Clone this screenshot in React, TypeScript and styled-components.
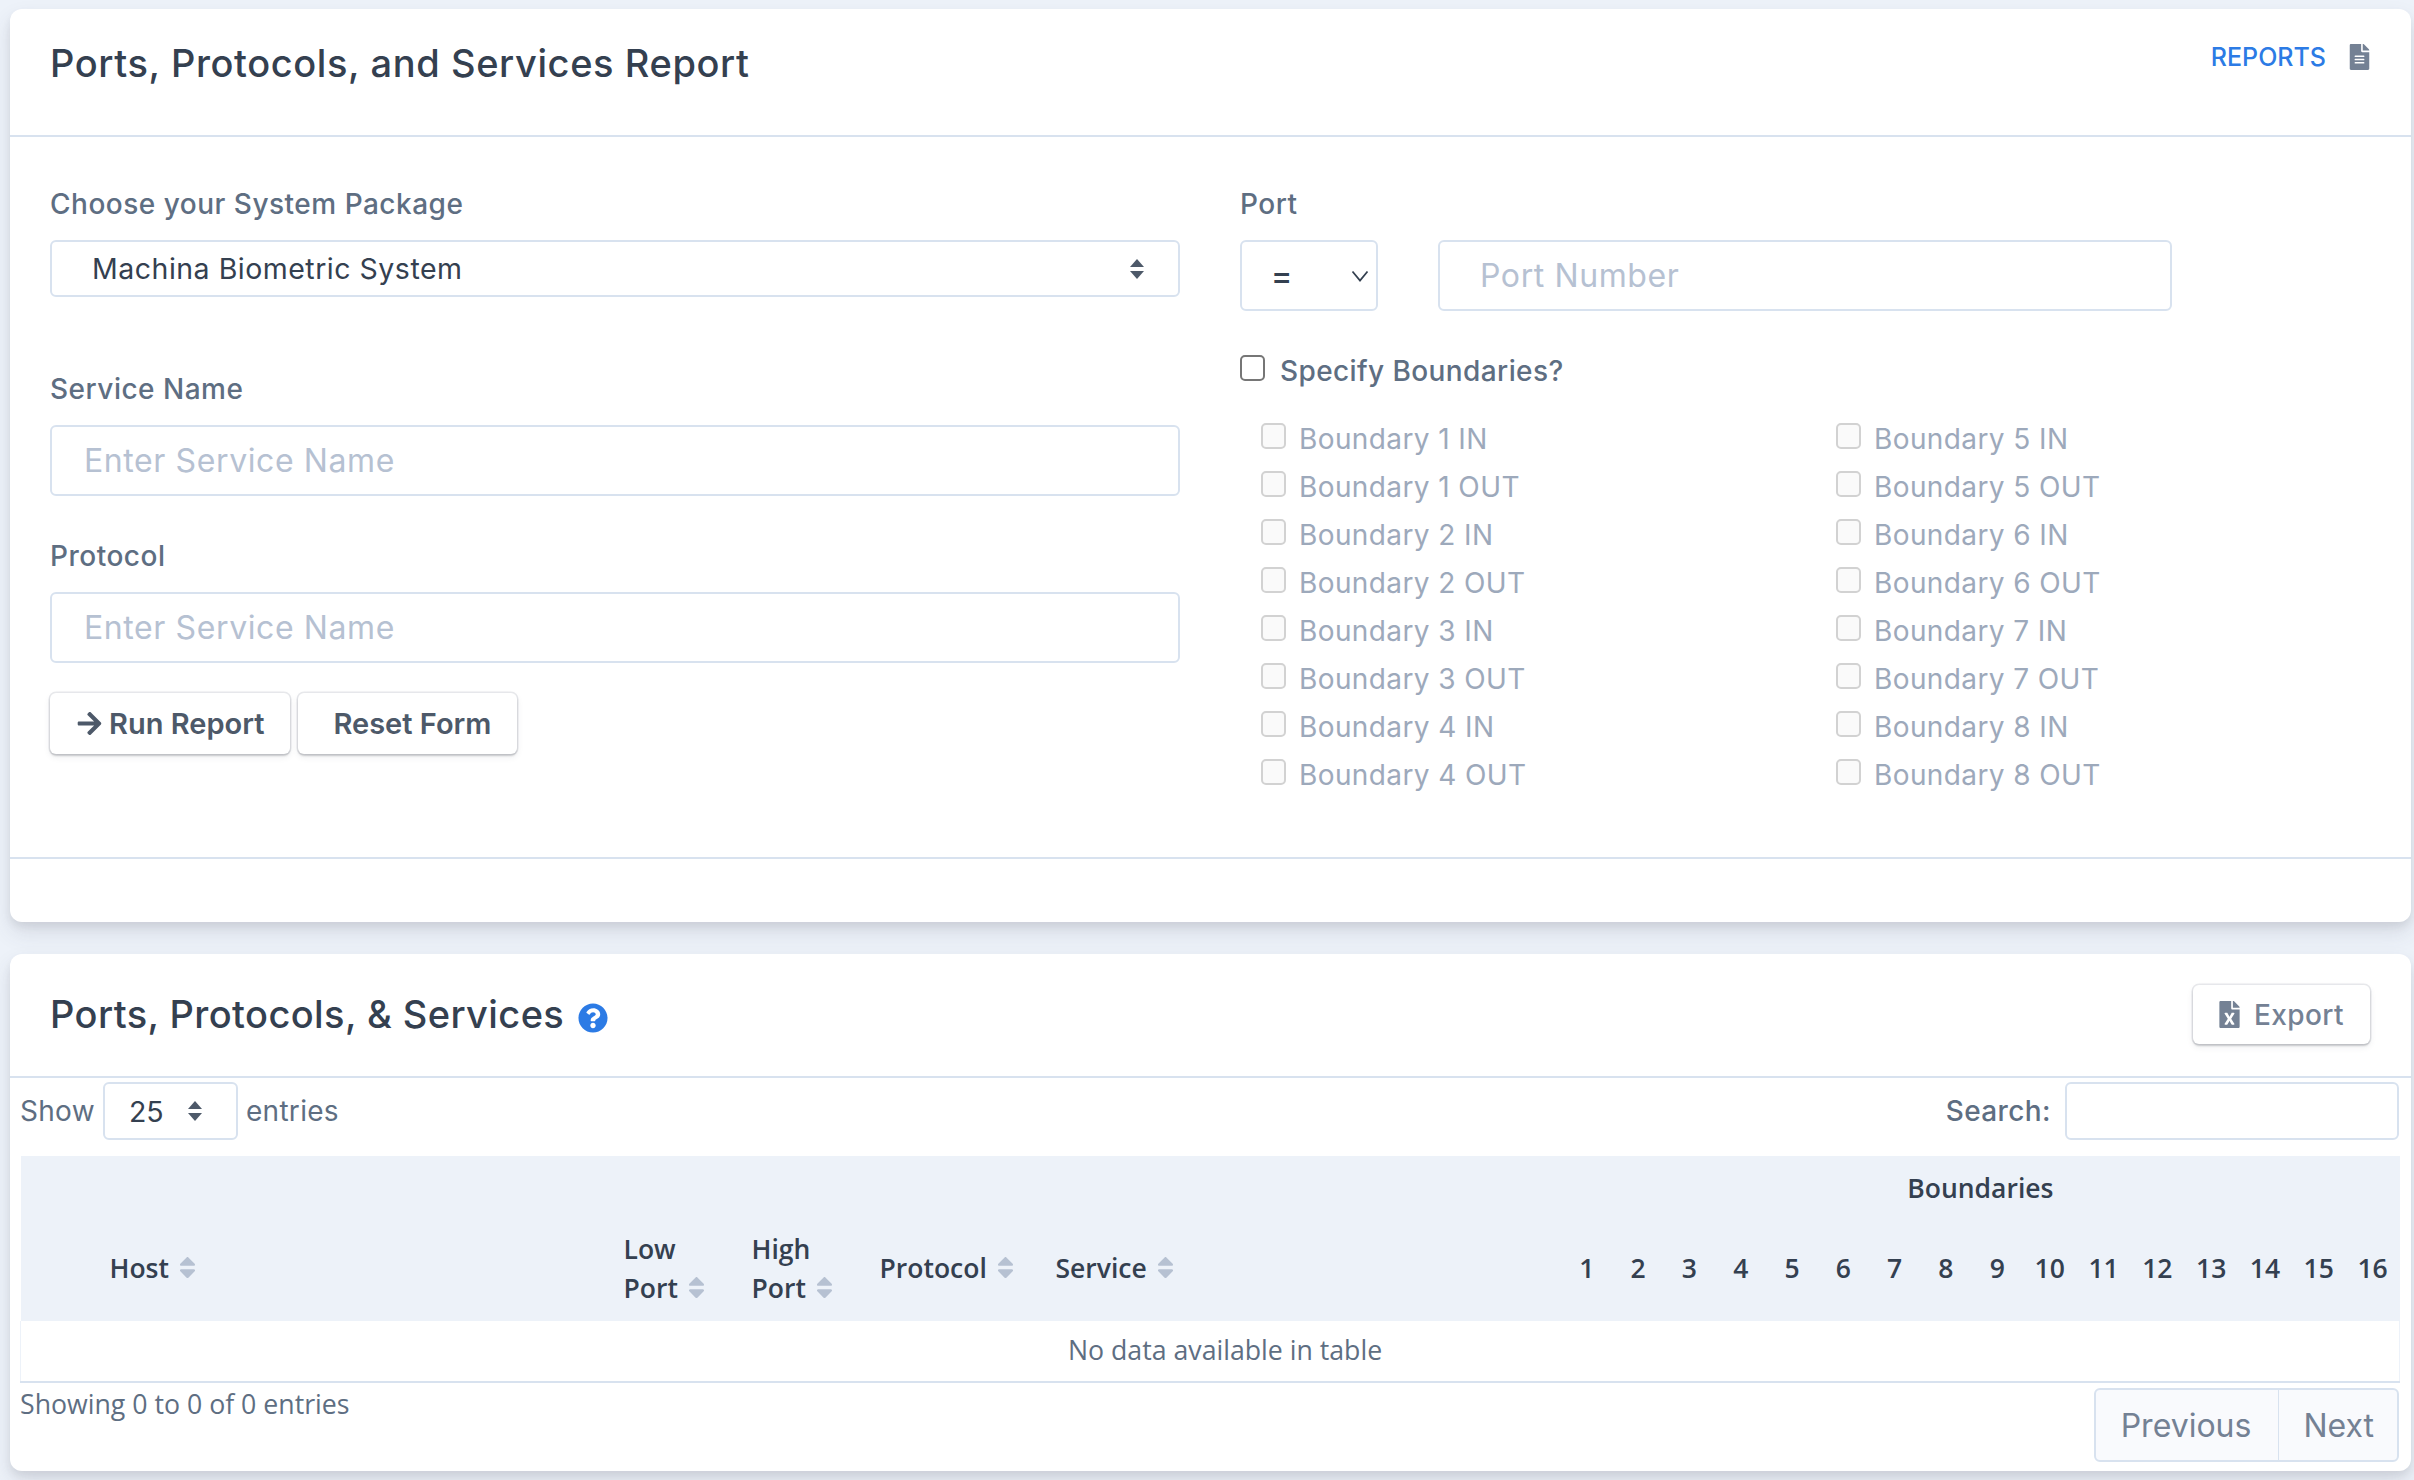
import React from 'react';
import styled, { createGlobalStyle } from 'styled-components';
import { FaFileAlt, FaFileExcel, FaQuestionCircle, FaArrowRight, FaSort } from 'react-icons/fa';

const headingFont = `Inter, 'Liberation Sans', sans-serif`;
const bodyFont = `'Open Sans', 'Liberation Sans', sans-serif`;

const updown = (color: string) =>
  `url("data:image/svg+xml,%3Csvg xmlns='http://www.w3.org/2000/svg' width='16' height='20' viewBox='0 0 16 20'%3E%3Cpath d='M8 0l7 8H1z' fill='${color}'/%3E%3Cpath d='M8 20l7-8H1z' fill='${color}'/%3E%3C/svg%3E")`;
const chevron = `url("data:image/svg+xml,%3Csvg xmlns='http://www.w3.org/2000/svg' width='18' height='12' viewBox='0 0 18 12'%3E%3Cpath d='M1.5 1.5l7.5 9 7.5-9' fill='none' stroke='%23344050' stroke-width='1.8'/%3E%3C/svg%3E")`;

const GlobalStyle = createGlobalStyle`
  * { box-sizing: border-box; }
  html, body { margin: 0; padding: 0; }
  body {
    background: #edf2f9;
    font-family: ${bodyFont};
    color: #5e6e82;
  }
`;

const Page = styled.div`
  display: flex;
  flex-direction: column;
  gap: 32px;
  padding: 9px 3px 0 10px;
  height: 1480px;
  overflow: hidden;
`;

const Card = styled.section`
  background: #fff;
  border-radius: 12px;
  box-shadow: 0 11px 22px 0 rgba(65, 69, 88, 0.12), 0 5px 9px 0 rgba(0, 0, 0, 0.07);
  display: flex;
  flex-direction: column;
`;

const CardHeader = styled.header<{ $height: number }>`
  height: ${(p) => p.$height}px;
  border-bottom: 2px solid #d8e2ef;
  padding: 0 41px 0 40px;
  display: flex;
  justify-content: space-between;
`;

const Title = styled.h2`
  margin: 0;
  height: 120px;
  font-family: ${headingFont};
  font-weight: 500;
  font-size: 38px;
  letter-spacing: 0.4px;
  color: #344050;
  display: flex;
  align-items: center;
  gap: 14px;
`;

const TitleTop = styled(Title)`
  height: 108px;
  letter-spacing: 0.6px;
`;

const ReportsLink = styled.a`
  display: flex;
  align-items: center;
  gap: 23px;
  height: 96px;
  font-family: ${headingFont};
  font-weight: 500;
  font-size: 25px;
  color: #2c7be5;
  text-decoration: none;
  svg {
    color: #748194;
    font-size: 26px;
    width: 21px;
  }
`;

const FormBody = styled.div`
  height: 720px;
  padding: 50px 40px 0;
  display: grid;
  grid-template-columns: 1130px 1fr;
  column-gap: 60px;
`;

const Column = styled.div`
  display: flex;
  flex-direction: column;
`;

const Label = styled.label<{ $top?: number }>`
  display: block;
  height: 34px;
  line-height: 34px;
  margin-top: ${(p) => p.$top ?? 0}px;
  margin-bottom: 19px;
  font-family: ${headingFont};
  font-weight: 500;
  font-size: 28px;
  letter-spacing: 0.5px;
  color: #5e6e82;
`;

const BaseSelect = styled.select`
  appearance: none;
  background-color: #fff;
  background-repeat: no-repeat;
  border: 2px solid #d8e2ef;
  border-radius: 6px;
  font-family: ${headingFont};
  color: #344050;
  outline: none;
`;

const PackageSelect = styled(BaseSelect)`
  width: 100%;
  height: 57px;
  padding: 0 40px;
  font-size: 28.5px;
  letter-spacing: 0.5px;
  background-image: ${updown('%234d5969')};
  background-position: right 33px center;
`;

const TextInput = styled.input<{ $width?: number; $pad?: number }>`
  width: ${(p) => (p.$width ? `${p.$width}px` : '100%')};
  height: 71px;
  padding: 0 ${(p) => p.$pad ?? 32}px;
  border: 2px solid #d8e2ef;
  border-radius: 6px;
  font-family: ${headingFont};
  font-size: 32px;
  letter-spacing: 0.6px;
  color: #344050;
  outline: none;
  &::placeholder {
    color: #b6c1d2;
    opacity: 1;
  }
`;

const ButtonRow = styled.div`
  display: flex;
  gap: 8px;
  margin-top: 30px;
`;

const Button = styled.button<{ $padLeft?: number }>`
  height: 61px;
  padding: 0 26px 0 ${(p) => p.$padLeft ?? 26}px;
  border: none;
  border-radius: 6px;
  background: #fff;
  display: inline-flex;
  align-items: center;
  gap: 6px;
  font-family: ${headingFont};
  font-weight: 600;
  font-size: 29px;
  color: #4d5969;
  box-shadow: 0 0 0 1.5px rgba(43, 45, 80, 0.1), 0 3px 7px 0 rgba(43, 45, 80, 0.08),
    0 2px 2px 0 rgba(0, 0, 0, 0.07), 0 2px 3px 0 rgba(0, 0, 0, 0.08);
  svg {
    font-size: 27px;
  }
`;

const PortRow = styled.div`
  display: flex;
  gap: 60px;
`;

const PortSelect = styled(BaseSelect)`
  width: 138px;
  height: 71px;
  padding: 0 29px;
  font-size: 32px;
  font-weight: 500;
  background-image: ${chevron};
  background-position: right 7px center;
`;

const SpecifyRow = styled.label`
  display: flex;
  align-items: flex-start;
  gap: 15px;
  margin-top: 44px;
  height: 26px;
  font-family: ${headingFont};
  font-weight: 500;
  font-size: 28px;
  letter-spacing: 0.4px;
  line-height: 32px;
  color: #5e6e82;
`;

const Check = styled.input`
  appearance: none;
  flex: none;
  margin: 0;
  width: 25px;
  height: 26px;
  border: 2px solid #767676;
  border-radius: 5px;
  background: #fff;
  &:disabled {
    border-color: #d2d2d2;
    background: #fafafa;
  }
`;

const BoundaryGrid = styled.div`
  display: grid;
  grid-template-columns: 575px 1fr;
  grid-template-rows: repeat(8, 48px);
  grid-auto-flow: column;
  margin-top: 38px;
  padding-left: 21px;
`;

const BoundaryItem = styled.label`
  display: flex;
  align-items: flex-start;
  gap: 13px;
  font-family: ${headingFont};
  font-size: 28px;
  letter-spacing: 0.4px;
  line-height: 40px;
  color: #9da9bb;
  ${Check} {
    margin-top: 4px;
  }
`;

const FooterStrip = styled.div`
  height: 65px;
  border-top: 2px solid #d8e2ef;
`;

const ExportButton = styled(Button)`
  height: 59px;
  margin-top: 31px;
  gap: 14px;
  font-weight: 500;
  font-size: 28px;
  letter-spacing: 0.4px;
  color: #748194;
  svg {
    font-size: 27px;
    width: 21px;
  }
`;

const HelpIcon = styled(FaQuestionCircle)`
  color: #2c7be5;
  font-size: 30px;
  margin-top: 7px;
`;

const TableArea = styled.div`
  padding: 4px 12px 9px 10px;
  display: flex;
  flex-direction: column;
`;

const Controls = styled.div`
  display: flex;
  justify-content: space-between;
  align-items: center;
  height: 58px;
  margin-bottom: 16px;
`;

const ShowLabel = styled.div`
  display: flex;
  align-items: center;
  gap: 8px;
  font-family: ${headingFont};
  font-size: 28px;
  letter-spacing: 0.3px;
  color: #5e6e82;
`;

const LengthSelect = styled(BaseSelect)`
  width: 135px;
  height: 58px;
  padding: 0 24px;
  font-size: 28.5px;
  background-image: ${updown('%234d5969')};
  background-position: right 33px center;
`;

const SearchLabel = styled.label`
  display: flex;
  align-items: center;
  gap: 14px;
  font-family: ${headingFont};
  font-weight: 500;
  font-size: 28px;
  letter-spacing: 0.4px;
  color: #5e6e82;
`;

const SearchInput = styled.input`
  width: 334px;
  height: 58px;
  border: 2px solid #d8e2ef;
  border-radius: 6px;
  outline: none;
`;

const Table = styled.table`
  width: 100%;
  table-layout: fixed;
  border-collapse: collapse;
`;

const HeadRow = styled.tr<{ $height: number }>`
  height: ${(p) => p.$height}px;
  background: #edf2f9;
`;

const Th = styled.th`
  padding: 0 18px 5px;
  font-family: ${bodyFont};
  font-weight: 600;
  font-size: 26.5px;
  line-height: 39.5px;
  text-align: left;
  color: #344050;
  white-space: nowrap;
  svg {
    color: #b6c1d2;
    font-size: 27px;
    margin-left: 5px;
    vertical-align: -3px;
  }
`;

const NumTh = styled(Th)`
  padding: 0 0 5px;
  text-align: center;
`;

const BoundariesTh = styled(NumTh)`
  padding: 0;
`;

const EmptyCell = styled.td`
  height: 61px;
  padding: 0 0 3px 30px;
  border: 1px solid #edf2f9;
  border-top: none;
  border-bottom: 2px solid #d8e2ef;
  text-align: center;
  font-size: 26.7px;
  color: #5e6e82;
`;

const TableFooter = styled.div`
  display: flex;
  justify-content: space-between;
  align-items: flex-start;
`;

const Info = styled.div`
  font-size: 26.7px;
  line-height: 42px;
  color: #5e6e82;
`;

const Pager = styled.nav`
  display: flex;
  margin-top: 5px;
  height: 74px;
  border: 2px solid #d8e2ef;
  border-radius: 6px;
  background: #f9fafd;
`;

const PageLink = styled.a`
  display: flex;
  align-items: center;
  padding: 0 27px 0 25px;
  font-family: ${headingFont};
  font-size: 32px;
  color: #748194;
  & + & {
    border-left: 1px solid #d8e2ef;
    padding: 0 23px 0 24px;
  }
`;

const boundaries = [1, 2, 3, 4, 5, 6, 7, 8].flatMap((n) => [`Boundary ${n} IN`, `Boundary ${n} OUT`]);
const numbers = Array.from({ length: 16 }, (_, i) => i + 1);
const colWidths = [71, 514, 128, 128, 176, 523.7, ...numbers.map((n) => (n < 10 ? 51.3 : 53.8))];

const App: React.FC = () => {
  return (
    <Page>
      <GlobalStyle />
      <Card>
        <CardHeader $height={128}>
          <TitleTop>Ports, Protocols, and Services Report</TitleTop>
          <ReportsLink href="#">
            REPORTS
            <FaFileAlt />
          </ReportsLink>
        </CardHeader>
        <FormBody>
          <Column>
            <Label>Choose your System Package</Label>
            <PackageSelect defaultValue="Machina Biometric System">
              <option>Machina Biometric System</option>
            </PackageSelect>
            <Label $top={75}>Service Name</Label>
            <TextInput placeholder="Enter Service Name" />
            <Label $top={43}>Protocol</Label>
            <TextInput placeholder="Enter Service Name" />
            <ButtonRow>
              <Button>
                <FaArrowRight />
                Run Report
              </Button>
              <Button $padLeft={35}>Reset Form</Button>
            </ButtonRow>
          </Column>
          <Column>
            <Label>Port</Label>
            <PortRow>
              <PortSelect defaultValue="=">
                <option>=</option>
              </PortSelect>
              <TextInput $width={734} $pad={40} placeholder="Port Number" />
            </PortRow>
            <SpecifyRow>
              <Check type="checkbox" />
              Specify Boundaries?
            </SpecifyRow>
            <BoundaryGrid>
              {boundaries.map((b) => (
                <BoundaryItem key={b}>
                  <Check type="checkbox" disabled />
                  {b}
                </BoundaryItem>
              ))}
            </BoundaryGrid>
          </Column>
        </FormBody>
        <FooterStrip />
      </Card>
      <Card>
        <CardHeader $height={124}>
          <Title>
            Ports, Protocols, &amp; Services
            <HelpIcon />
          </Title>
          <ExportButton>
            <FaFileExcel />
            Export
          </ExportButton>
        </CardHeader>
        <TableArea>
          <Controls>
            <ShowLabel>
              Show
              <LengthSelect defaultValue="25">
                <option>25</option>
              </LengthSelect>
              entries
            </ShowLabel>
            <SearchLabel>
              Search:
              <SearchInput />
            </SearchLabel>
          </Controls>
          <Table>
            <colgroup>
              {colWidths.map((w, i) => (
                <col key={i} style={{ width: w }} />
              ))}
            </colgroup>
            <thead>
              <HeadRow $height={66}>
                <Th colSpan={6} />
                <BoundariesTh colSpan={16}>Boundaries</BoundariesTh>
              </HeadRow>
              <HeadRow $height={99}>
                <Th />
                <Th>
                  Host
                  <FaSort />
                </Th>
                <Th>
                  Low
                  <br />
                  Port
                  <FaSort />
                </Th>
                <Th>
                  High
                  <br />
                  Port
                  <FaSort />
                </Th>
                <Th>
                  Protocol
                  <FaSort />
                </Th>
                <Th>
                  Service
                  <FaSort />
                </Th>
                {numbers.map((n) => (
                  <NumTh key={n}>{n}</NumTh>
                ))}
              </HeadRow>
            </thead>
            <tbody>
              <tr>
                <EmptyCell colSpan={22}>No data available in table</EmptyCell>
              </tr>
            </tbody>
          </Table>
          <TableFooter>
            <Info>Showing 0 to 0 of 0 entries</Info>
            <Pager>
              <PageLink>Previous</PageLink>
              <PageLink>Next</PageLink>
            </Pager>
          </TableFooter>
        </TableArea>
      </Card>
    </Page>
  );
};

export default App;
